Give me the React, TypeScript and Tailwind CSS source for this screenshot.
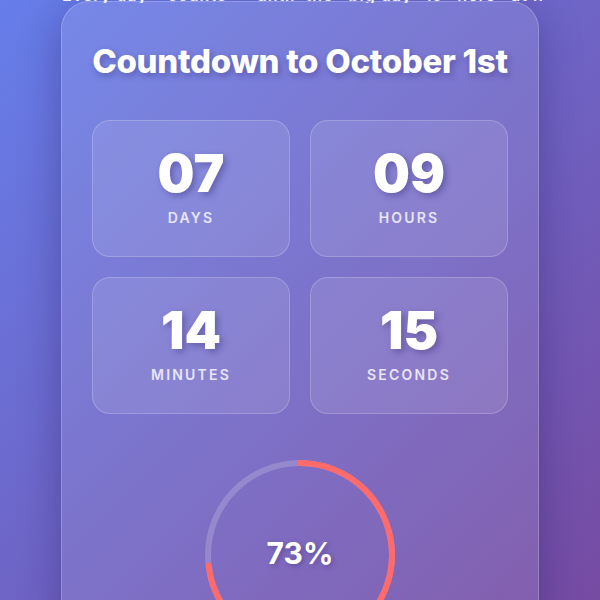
import React from "react";

const units = [
  { value: "07", label: "DAYS" },
  { value: "09", label: "HOURS" },
  { value: "14", label: "MINUTES" },
  { value: "15", label: "SECONDS" },
];

export default function App() {
  const r = 92;
  const c = 2 * Math.PI * r;
  const pct = 0.73;
  return (
    <div
      className="relative min-h-screen w-full overflow-hidden bg-[linear-gradient(135deg,#667eea_0%,#764ba2_100%)] flex flex-col items-center"
      style={{ fontFamily: "Inter, 'Noto Sans', sans-serif", height: 600 }}
    >
      <div className="absolute left-[62px] top-[-15px] h-[18px] w-[480px] overflow-hidden whitespace-pre text-[16px] leading-[20px] font-semibold tracking-[1px] text-white/90">
        {"Every day    counts      until  the   big day   is   here   at last  —  stay  tuned  !"}
      </div>
      <div className="mt-[1px] w-[478px] shrink-0 rounded-[28px] border border-white/20 bg-white/10 px-[30px] pt-[37px] pb-10 shadow-[0_10px_40px_rgba(30,20,90,0.35)]">
        <h1 className="-mx-4 whitespace-nowrap text-center text-[33px] leading-[44px] font-extrabold text-white tracking-[-0.3px] [text-shadow:2px_3px_6px_rgba(40,30,100,0.35)]">
          Countdown to October 1st
        </h1>
        <div className="mt-[37px] grid grid-cols-2 gap-5">
          {units.map((u) => (
            <div
              key={u.label}
              className="h-[137px] rounded-[18px] border border-white/20 bg-white/10 pt-[25px] flex flex-col items-center"
            >
              <div className="text-[52px] leading-[56px] font-black text-white [text-shadow:3px_3px_6px_rgba(40,30,100,0.35)]">
                {u.value}
              </div>
              <div className="mt-[6px] text-[14px] leading-[20px] font-semibold tracking-[2.2px] text-white/80">
                {u.label}
              </div>
            </div>
          ))}
        </div>
        <div className="relative mx-auto mt-[41px] h-[200px] w-[200px]">
          <svg width="200" height="200" viewBox="0 0 200 200" className="-rotate-90">
            <circle cx="100" cy="100" r={r} fill="none" stroke="rgba(255,255,255,0.18)" strokeWidth="6" />
            <circle
              cx="100"
              cy="100"
              r={r}
              fill="none"
              stroke="#ff6b6b"
              strokeWidth="6"
              strokeLinecap="round"
              strokeDasharray={c}
              strokeDashoffset={c * (1 - pct)}
            />
          </svg>
          <div className="absolute inset-0 flex items-center justify-center pb-[4px] text-[30px] font-bold text-white [text-shadow:2px_2px_5px_rgba(40,30,100,0.35)]">
            73%
          </div>
        </div>
      </div>
    </div>
  );
}
